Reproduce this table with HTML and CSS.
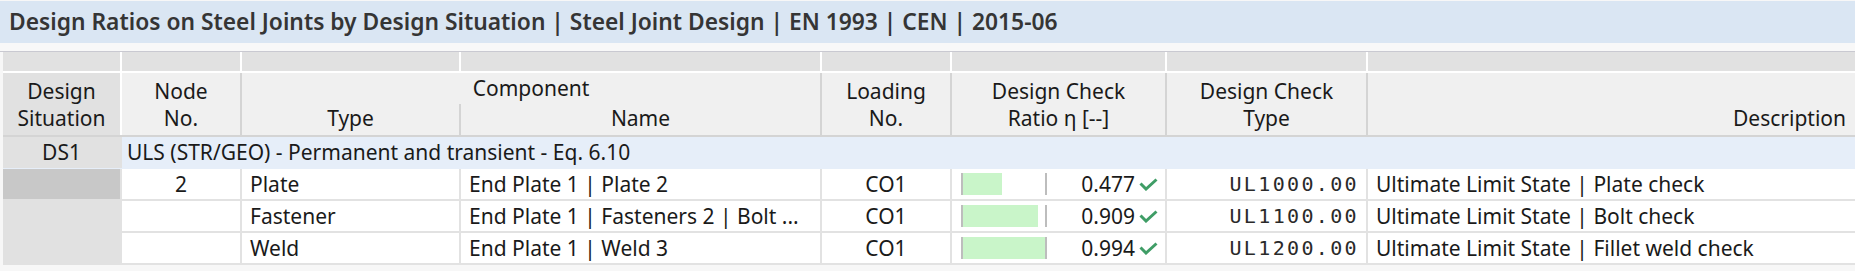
FILE: index.html
```html
<!DOCTYPE html>
<html>
<head>
<meta charset="utf-8">
<link rel="stylesheet" href="styles.css">
</head>
<body>
<div class="title">Design Ratios on Steel Joints by Design Situation | Steel Joint Design | EN 1993 | CEN | 2015-06</div>
<div class="gap"></div>
<div class="grid">
  <div class="row top">
    <div class="c c1"></div><div class="c"></div><div class="c"></div><div class="c"></div><div class="c"></div><div class="c"></div><div class="c"></div><div class="c"></div>
  </div>
  <div class="row head">
    <div class="c c1 hc"><span>Design</span><span>Situation</span></div>
    <div class="c hc"><span>Node</span><span>No.</span></div>
    <div class="c comp">
      <div class="comp-title">Component</div>
      <div class="comp-sub"><div class="sub sub-type">Type</div><div class="sub sub-name">Name</div></div>
    </div>
    <div class="c hc"><span>Loading</span><span>No.</span></div>
    <div class="c hc"><span>Design Check</span><span>Ratio η [--]</span></div>
    <div class="c hc"><span>Design Check</span><span>Type</span></div>
    <div class="c hc hdesc"><span>&nbsp;</span><span>Description</span></div>
  </div>
  <div class="row ds">
    <div class="c c1 center">DS1</div>
    <div class="c ds-text">ULS (STR/GEO) - Permanent and transient - Eq. 6.10</div>
  </div>
  <div class="row data sel">
    <div class="c c1"></div>
    <div class="c center">2</div>
    <div class="c">Plate</div>
    <div class="c">End Plate 1 | Plate 2</div>
    <div class="c center">CO1</div>
    <div class="c ratio"><div class="bar"><div class="fill" style="width:47.7%"></div></div><span class="val">0.477</span><svg class="chk" width="19" height="13" viewBox="0 0 19 13"><path d="M1.5 5.5 L7 11 L17.5 1.5" fill="none" stroke="#3f9d66" stroke-width="3"/></svg></div>
    <div class="c mono">UL1000.00</div>
    <div class="c">Ultimate Limit State | Plate check</div>
  </div>
  <div class="row data">
    <div class="c c1"></div>
    <div class="c center"></div>
    <div class="c">Fastener</div>
    <div class="c">End Plate 1 | Fasteners 2 | Bolt ...</div>
    <div class="c center">CO1</div>
    <div class="c ratio"><div class="bar"><div class="fill" style="width:90.9%"></div></div><span class="val">0.909</span><svg class="chk" width="19" height="13" viewBox="0 0 19 13"><path d="M1.5 5.5 L7 11 L17.5 1.5" fill="none" stroke="#3f9d66" stroke-width="3"/></svg></div>
    <div class="c mono">UL1100.00</div>
    <div class="c">Ultimate Limit State | Bolt check</div>
  </div>
  <div class="row data">
    <div class="c c1"></div>
    <div class="c center"></div>
    <div class="c">Weld</div>
    <div class="c">End Plate 1 | Weld 3</div>
    <div class="c center">CO1</div>
    <div class="c ratio"><div class="bar"><div class="fill" style="width:99.4%"></div></div><span class="val">0.994</span><svg class="chk" width="19" height="13" viewBox="0 0 19 13"><path d="M1.5 5.5 L7 11 L17.5 1.5" fill="none" stroke="#3f9d66" stroke-width="3"/></svg></div>
    <div class="c mono">UL1200.00</div>
    <div class="c">Ultimate Limit State | Fillet weld check</div>
  </div>
</div>
</body>
</html>
```
FILE: styles.css
```css
html, body {
  margin: 0;
  padding: 0;
  background: #f7f7f7;
  font-family: "Noto Sans", "Open Sans", sans-serif;
  color: #1a1a1a;
  overflow: hidden;
}
.title {
  height: 42px;
  margin-top: 1px;
  background: #dae6f3;
  color: #353535;
  font-weight: 600;
  font-size: 22.8px;
  line-height: 42px;
  padding-left: 9px;
  white-space: nowrap;
}
.gap {
  height: 8px;
  background: #f8f8f8;
  border-bottom: 1px solid #c9c9d1;
}
.grid {
  margin-left: 3px;
  font-size: 21px;
  display: flex;
  flex-direction: column;
  background: #f7f7f7;
}
.row {
  display: grid;
  grid-template-columns: 117px 118px 217px 359px 128px 213px 199px 1fr;
  column-gap: 2px;
}
.c {
  white-space: nowrap;
  overflow: hidden;
}
.top {
  height: 19px;
  background: #ffffff;
  border-bottom: 2px solid #ffffff;
}
.top .c { background: #e1e1e1; }
.head {
  height: 62px;
  background: #d4d4d4;
  border-bottom: 2px solid #d4d4d4;
}
.head .c { background: #f0f0f0; }
.head .c1 { background: #e1e1e1; box-shadow: 2px 0 0 #ffffff; }
.hc {
  display: flex;
  flex-direction: column;
  align-items: center;
  justify-content: center;
  line-height: 27px;
  padding-top: 2px;
}
.hdesc { align-items: flex-end; padding-right: 9px; }
.comp {
  grid-column: span 2;
  display: flex;
  flex-direction: column;
  background: transparent !important;
}
.comp-title {
  height: 31px;
  line-height: 30px;
  text-align: center;
  background: #f0f0f0;
}
.comp-sub {
  height: 31px;
  display: grid;
  grid-template-columns: 217px 359px;
  column-gap: 2px;
  background: #d4d4d4;
}
.sub {
  background: #f0f0f0;
  text-align: center;
  line-height: 29px;
}
.ds {
  height: 31px;
  background: #e6eef9;
  border-bottom: 1px solid #e6eef9;
  grid-template-columns: 117px 1fr;
  column-gap: 2px;
  line-height: 31px;
}
.ds .c1 { background: #e1e1e1; box-shadow: 2px 0 0 #e1e1e1; }
.ds-text { padding-left: 5px; background: #e6eef9; }
.data {
  height: 30px;
  background: #e2e2e2;
  border-bottom: 2px solid #e2e2e2;
  line-height: 30px;
}
.data .c { background: #ffffff; padding-left: 8px; }
.data .c1 { background: #e1e1e1; box-shadow: 0 2px 0 #e1e1e1; padding: 0; }
.data.sel .c1 { background: #c8c8c8; box-shadow: 0 2px 0 #e1e1e1; }
.data .center { text-align: center; padding-left: 0; }
.ratio {
  display: flex;
  align-items: center;
  padding-left: 9px !important;
  padding-right: 7px;
}
.bar {
  width: 82px;
  height: 22px;
  border-left: 2px solid #bdbdbd;
  border-right: 2px solid #bdbdbd;
  flex: none;
}
.fill {
  height: 100%;
  background: #c9f5c9;
}
.val { margin-left: auto; }
.chk { margin-left: 4px; flex: none; }
.mono {
  font-family: "DejaVu Sans Mono", monospace;
  font-size: 20px;
  text-align: right;
  padding-right: 7px;
  letter-spacing: 2.35px;
  color: #2a2a2a;
}
.center { text-align: center; }
```
